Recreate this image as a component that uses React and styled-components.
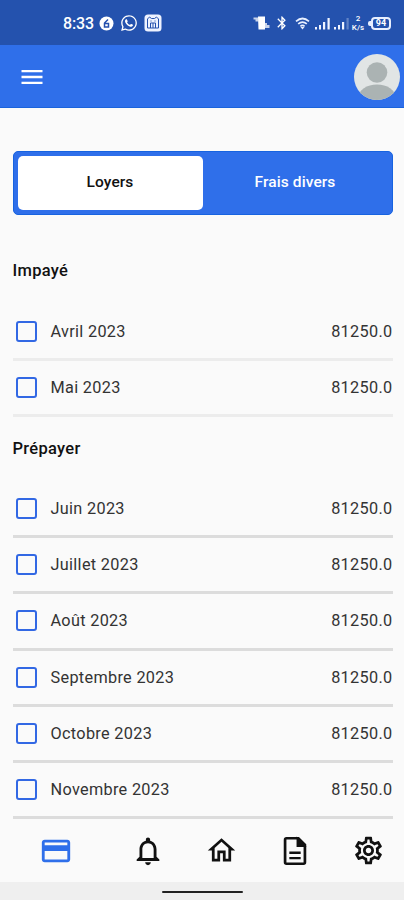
import styled, { createGlobalStyle } from "styled-components";
import { useState } from "react";
import {
  MdCreditCard,
  MdNotificationsNone,
  MdOutlineHome,
  MdOutlineSettings,
  MdMenu,
  MdBluetooth,
} from "react-icons/md";
import { FaWhatsapp } from "react-icons/fa";

const unpaid = ["Avril 2023", "Mai 2023"];
const prepay = [
  "Juin 2023",
  "Juillet 2023",
  "Août 2023",
  "Septembre 2023",
  "Octobre 2023",
  "Novembre 2023",
];

const DocumentIcon = () => (
  <svg width="34" height="34" viewBox="0 0 24 24" fill="none" stroke="currentColor">
    <path
      d="M6 3h8.4L19 7.6V20a1 1 0 0 1-1 1H6a1 1 0 0 1-1-1V4a1 1 0 0 1 1-1z"
      strokeWidth="1.9"
    />
    <path d="M13.6 3v5.6H19z" fill="currentColor" strokeWidth="1" />
    <path d="M8 13.2h8M8 17h8" strokeWidth="1.7" />
  </svg>
);

const VibrateIcon = () => (
  <svg width="18" height="16" viewBox="0 0 18 16" fill="#fff">
    <path d="M5 1.500h7v13H5.500z" />
    <path d="M0.500 2.500h5v4H2.500v-2h-2zM11.500 8h2.500v2h2.500v3h-5z" opacity=".75" />
  </svg>
);

const WifiIcon = () => (
  <svg width="15" height="13" viewBox="0 0 15 13" fill="none" stroke="#e8efff" strokeWidth="1.7">
    <path d="M1 4.300Q7.500-1.300 14 4.300M3.200 6.900q4.300-3.600 8.600 0M5.400 9.300q2.100-1.800 4.200 0" />
    <path d="M5.500 10h4l-2 2.500z" fill="#e8efff" stroke="none" />
  </svg>
);

const SignalIcon = ({ level }) => (
  <svg width="15" height="13" viewBox="0 0 15 13" fill="#f0f4ff">
    <rect x="0" y="10" width="2" height="2.500" />
    <rect x="4" y="8" width="2" height="4.500" />
    <rect x="8" y="5" width="2.200" height="7.500" />
    <rect x="12.500" y="1" width="2.200" height="11.500" opacity={level === 4 ? 1 : 0.3} />
  </svg>
);

const GhostIcon = () => (
  <svg width="18" height="18" viewBox="0 0 18 18">
    <rect x="0.500" y="0.500" width="17" height="17" rx="3.500" fill="#eef2ff" />
    <path
      d="M3.500 14V5l2-2 2 1.500h3l2-1.500 2 2v9zM6.500 14V9h5v5M9 9v5M6.500 7h1M10.500 7h1"
      fill="none"
      stroke="#2450ad"
      strokeWidth="1"
    />
  </svg>
);

const BadgeIcon = () => (
  <svg width="15" height="15" viewBox="0 0 15 15">
    <circle cx="7.500" cy="7.500" r="7" fill="#fff" />
    <path
      d="M9 3.500L5.500 7M5.500 7.500h4v3.500h-4z"
      fill="none"
      stroke="#2450ad"
      strokeWidth="1.500"
    />
  </svg>
);

const Rows = ({ months, strong }) => {
  const [checked, setChecked] = useState([]);

  const toggle = (month) => {
    setChecked(
      checked.includes(month)
        ? checked.filter((m) => m !== month)
        : [...checked, month]
    );
  };

  return months.map((month) => (
    <Row key={month} $strong={strong} onClick={() => toggle(month)}>
      <Checkbox $checked={checked.includes(month)} />
      <Month>{month}</Month>
      <Amount>81250.0</Amount>
    </Row>
  ));
};

const App = () => {
  const [tab, setTab] = useState("loyers");

  return (
    <Screen>
      <GlobalStyle />
      <StatusBar>
        <StatusLeft>
          <Clock>8:33</Clock>
          <BadgeIcon />
          <FaWhatsapp size={18} />
          <GhostIcon />
        </StatusLeft>
        <StatusRight>
          <VibrateIcon />
          <Bluetooth size={16} />
          <WifiIcon />
          <Signals>
            <SignalIcon level={4} />
            <SignalIcon level={3} />
          </Signals>
          <Speed>
            <span>2</span>
            <span>K/s</span>
          </Speed>
          <Battery>94</Battery>
        </StatusRight>
      </StatusBar>
      <AppBar>
        <MdMenu size={28} />
        <Avatar viewBox="0 0 46 46">
          <clipPath id="round">
            <circle cx="23" cy="23" r="23" />
          </clipPath>
          <g clipPath="url(#round)">
            <rect width="46" height="46" fill="#e1e5e5" />
            <circle cx="23" cy="18.500" r="10.300" fill="#abb3b3" />
            <ellipse cx="23" cy="43" rx="18.500" ry="12.500" fill="#abb3b3" />
          </g>
        </Avatar>
      </AppBar>
      <Content>
        <Tabs>
          <Tab $active={tab === "loyers"} onClick={() => setTab("loyers")}>
            Loyers
          </Tab>
          <Tab $active={tab === "frais"} onClick={() => setTab("frais")}>
            Frais divers
          </Tab>
        </Tabs>
        <Title $first>Impayé</Title>
        <Rows months={unpaid} />
        <Title>Prépayer</Title>
        <Rows months={prepay} strong />
      </Content>
      <BottomNav>
        <NavItem $width={112} $active>
          <MdCreditCard size={34} />
        </NavItem>
        <NavItem $width={72}>
          <MdNotificationsNone size={34} />
        </NavItem>
        <NavItem $width={75}>
          <MdOutlineHome size={33} />
        </NavItem>
        <NavItem $width={72}>
          <DocumentIcon />
        </NavItem>
        <NavItem $width={74}>
          <MdOutlineSettings size={33} />
        </NavItem>
      </BottomNav>
      <SystemBar>
        <Handle />
      </SystemBar>
    </Screen>
  );
};

export default App;

const GlobalStyle = createGlobalStyle`
  * {
    box-sizing: border-box;
  }
  body {
    margin: 0;
    background: #fafafa;
    font-family: Roboto, sans-serif;
  }
`;

const Screen = styled.div`
  width: 404px;
  height: 900px;
  display: flex;
  flex-direction: column;
  overflow: hidden;
  background: #fafafa;
`;

const StatusBar = styled.div`
  height: 45px;
  flex-shrink: 0;
  display: flex;
  align-items: center;
  justify-content: space-between;
  padding: 1px 13px 0 63px;
  background: #2452ae;
  color: white;
`;

const StatusLeft = styled.div`
  display: flex;
  align-items: center;
  gap: 6px;
`;

const Clock = styled.span`
  width: 30px;
  font-size: 16px;
  font-weight: 500;
  letter-spacing: -0.1px;
`;

const StatusRight = styled.div`
  display: flex;
  align-items: center;

  svg {
    flex-shrink: 0;
  }
`;

const Bluetooth = styled(MdBluetooth)`
  margin: 0 5px 0 3px;
`;

const Signals = styled.div`
  display: flex;
  gap: 4px;
  margin: 0 2px 0 5px;
`;

const Speed = styled.div`
  width: 14px;
  display: flex;
  flex-direction: column;
  align-items: center;
  font-size: 8px;
  font-weight: 500;
  line-height: 9.500px;
`;

const Battery = styled.div`
  width: 20px;
  height: 13px;
  margin-left: 6px;
  position: relative;
  border: 2px solid #e8efff;
  border-radius: 4px;
  font-size: 9px;
  font-weight: 700;
  line-height: 9px;
  text-align: center;

  &::before {
    content: "";
    position: absolute;
    left: -5px;
    top: 2px;
    width: 3px;
    height: 5px;
    border-radius: 2px 0 0 2px;
    background: #e8efff;
  }
`;

const AppBar = styled.div`
  height: 63px;
  flex-shrink: 0;
  display: flex;
  align-items: center;
  justify-content: space-between;
  padding: 1px 4px 0 18px;
  background: #2f6fea;
  border-bottom: 1px solid #1a63dc;
  color: white;
`;

const Avatar = styled.svg`
  width: 46px;
  height: 46px;
`;

const Content = styled.div`
  height: 711.5px;
  flex-shrink: 0;
  padding: 43px 11.5px 0 12.5px;
`;

const Tabs = styled.div`
  height: 64px;
  display: flex;
  padding: 4px;
  background: #2f6fea;
  border: 1px solid #1763e0;
  border-radius: 5px;
`;

const Tab = styled.button`
  flex: 1;
  padding: 0 0 3px;
  border: none;
  border-radius: 5px;
  background: ${(props) => (props.$active ? "#fff" : "transparent")};
  color: ${(props) => (props.$active ? "#111" : "#fff")};
  font-family: inherit;
  font-size: 15.500px;
  font-weight: 500;
  letter-spacing: 0.1px;
  cursor: pointer;
`;

const Title = styled.h2`
  height: ${(props) => (props.$first ? "89.500px" : "64.750px")};
  margin: 0;
  padding-top: ${(props) => (props.$first ? "45px" : "21px")};
  color: #111;
  font-size: 16.500px;
  font-weight: 500;
  line-height: 21px;
  letter-spacing: 0.3px;
`;

const Row = styled.div`
  height: 56.250px;
  display: flex;
  align-items: center;
  padding-left: 3px;
  border-bottom: 3px solid ${(props) => (props.$strong ? "#dcdcdc" : "#ececec")};
  color: #333;
  font-size: 16.250px;
  letter-spacing: 0.32px;
`;

const Checkbox = styled.span`
  width: 21px;
  height: 21px;
  border: 2px solid #3268e4;
  border-radius: 3px;
  background: ${(props) => (props.$checked ? "#3268e4" : "transparent")};
`;

const Month = styled.span`
  flex: 1;
  padding-left: 14px;
`;

const Amount = styled.span``;

const BottomNav = styled.div`
  height: 62.500px;
  flex-shrink: 0;
  display: flex;
  align-items: center;
`;

const NavItem = styled.div`
  width: ${(props) => props.$width}px;
  flex-shrink: 0;
  display: flex;
  justify-content: center;
  color: ${(props) => (props.$active ? "#2f6fea" : "#111")};
`;

const SystemBar = styled.div`
  flex: 1;
  display: flex;
  align-items: center;
  justify-content: center;
  padding-top: 2px;
  background: #efefef;
`;

const Handle = styled.div`
  width: 81px;
  height: 2px;
  border-radius: 1px;
  background: #222;
`;
